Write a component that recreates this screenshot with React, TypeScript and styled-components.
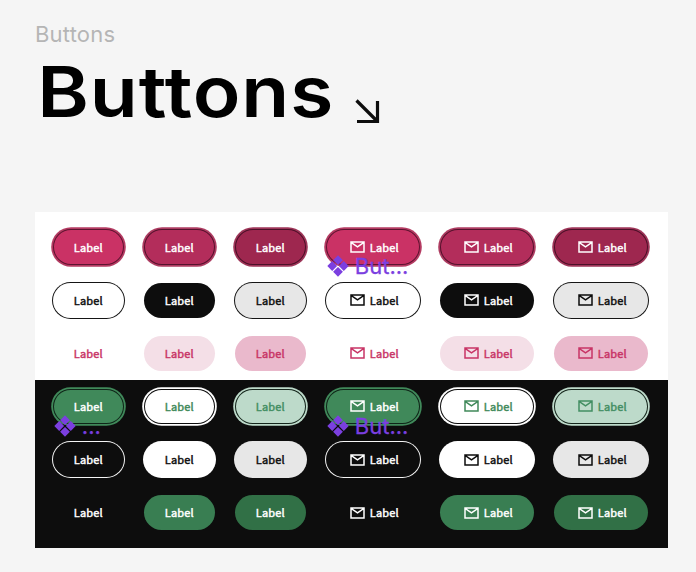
import React from "react";
import styled, { createGlobalStyle, css } from "styled-components";

const GlobalStyle = createGlobalStyle`
  * { box-sizing: border-box; }
  body { margin: 0; background: #f5f5f5; }
`;

const Page = styled.main`
  width: 696px;
  height: 572px;
  padding: 20px 28px 0 35px;
  overflow: hidden;
  background: #f5f5f5;
`;

const FrameName = styled.div`
  height: 28px;
  font: 400 22px/28px Inter, sans-serif;
  letter-spacing: 0.2px;
  color: #b5b5b5;
`;

const Header = styled.header`
  display: flex;
  height: 164px;
`;

const Title = styled.h1`
  width: 320px;
  margin: 0;
  padding: 2px 0 0 2px;
  font: 600 70px/84px Inter, sans-serif;
  letter-spacing: 0.8px;
  color: #000;
  white-space: nowrap;
  transform: scaleX(1.12);
  transform-origin: 0 0;
`;

const Arrow = styled.svg`
  width: 26px;
  height: 26px;
  margin-top: 51px;
`;

const Panel = styled.section<{ $dark?: boolean }>`
  display: grid;
  grid-template-columns: repeat(3, 71px) repeat(3, 94px);
  grid-auto-rows: 35.4px;
  gap: 17.8px 20px;
  width: 633px;
  height: 168px;
  padding: ${(p) => (p.$dark ? "8.7px" : "17.4px")} 0 0 17.8px;
  background: ${(p) => (p.$dark ? "#0d0d0d" : "#fff")};
`;

type Look = { bg: string; fg: string; line?: string; ring?: string; inner?: string };

const Button = styled.button<{ $look: Look; $icon: boolean }>`
  position: relative;
  display: flex;
  align-items: center;
  justify-content: center;
  gap: 5px;
  width: 100%;
  height: 100%;
  padding: 0 0 0 ${(p) => (p.$icon ? "3px" : "0")};
  border: 0;
  border-radius: 18px;
  color: ${(p) => p.$look.fg};
  background: ${(p) => p.$look.bg};
  ${(p) => p.$look.line && css`box-shadow: 0 0 0 1px ${p.$look.line};`}
  ${(p) =>
    p.$look.ring &&
    css`box-shadow: inset 0 0 0 1px ${p.$look.inner}, 0 0 0 1.8px ${p.$look.ring};`}
`;

const Text = styled.span`
  margin-bottom: 1px;
  font: 400 11px/18px "Noto Sans CJK SC", sans-serif;
  letter-spacing: 0.15px;
  -webkit-text-stroke: 0.45px currentColor;
`;

const MailIcon = styled.svg`
  width: 15px;
  height: 12px;
  flex: none;
`;

const Tag = styled.span`
  position: absolute;
  z-index: 1;
  left: 1px;
  top: 23px;
  display: flex;
  align-items: center;
  gap: 6px;
  font: 400 22px/28px Inter, sans-serif;
  color: #7b3fe0;
  white-space: nowrap;
  -webkit-text-stroke: 0.3px currentColor;
`;

const TagMark = styled.svg`
  width: 22px;
  height: 22px;
`;

const Mail = () => (
  <MailIcon viewBox="0 0 15 12" fill="none" stroke="currentColor" strokeWidth="1.5">
    <path d="M1 .9h13v10.2H1zM1 1.4l6.5 4.4 6.5-4.4" />
  </MailIcon>
);

const ComponentTag = ({ children }: { children: string }) => (
  <Tag>
    <TagMark viewBox="0 0 22 22" fill="currentColor">
      <path d="M11 .3l4.9 4.9L11 10.1 6.1 5.2zM5.2 6.1l4.9 4.9-4.9 4.9L.3 11zM16.8 6.1l4.9 4.9-4.9 4.9-4.9-4.9zM11 11.9l4.9 4.9-4.9 4.9-4.9-4.9z" />
    </TagMark>
    {children}
  </Tag>
);

const light: Look[][] = [
  [
    { bg: "#ca3265", fg: "#fff", ring: "#b43b62", inner: "#5d1430" },
    { bg: "#b32d5b", fg: "#fff", ring: "#ad3c61", inner: "#55122d" },
    { bg: "#9e274f", fg: "#fff", ring: "#9d3558", inner: "#4b1028" },
  ],
  [
    { bg: "#fff", fg: "#0d0d0d", line: "#151515" },
    { bg: "#0d0d0d", fg: "#fff" },
    { bg: "#e7e7e7", fg: "#0d0d0d", line: "#151515" },
  ],
  [
    { bg: "transparent", fg: "#c83466" },
    { bg: "#f4dfe7", fg: "#c83466" },
    { bg: "#eab9cc", fg: "#c83466" },
  ],
];

const dark: Look[][] = [
  [
    { bg: "#40895a", fg: "#fff", ring: "#40895a", inner: "#0f2518" },
    { bg: "#fff", fg: "#40895a", ring: "#fff", inner: "#0d0d0d" },
    { bg: "#bddaca", fg: "#438e63", ring: "#bddaca", inner: "#14251b" },
  ],
  [
    { bg: "#0d0d0d", fg: "#fff", line: "#f5f5f5" },
    { bg: "#fff", fg: "#0d0d0d", line: "#fff" },
    { bg: "#e7e7e7", fg: "#0d0d0d", line: "#e7e7e7" },
  ],
  [
    { bg: "transparent", fg: "#fff" },
    { bg: "#397e52", fg: "#fff" },
    { bg: "#317046", fg: "#fff" },
  ],
];

const Samples = ({ looks, tags }: { looks: Look[][]; tags: Record<number, string> }) => (
  <>
    {looks.map((row, r) =>
      [...row, ...row].map((look, c) => (
        <Button key={`${r}-${c}`} $look={look} $icon={c > 2}>
          {c > 2 && <Mail />}
          <Text>Label</Text>
          {r === 0 && tags[c] && <ComponentTag>{tags[c]}</ComponentTag>}
        </Button>
      ))
    )}
  </>
);

export default function App() {
  return (
    <>
      <GlobalStyle />
      <Page>
        <FrameName>Buttons</FrameName>
        <Header>
          <Title>Buttons</Title>
          <Arrow viewBox="0 0 26 26" fill="none" stroke="#0d0d0d" strokeWidth="3.2">
            <path d="M1.5 1.5L22 22M22.5 2v20.5H2" />
          </Arrow>
        </Header>
        <Panel>
          <Samples looks={light} tags={{ 3: "But..." }} />
        </Panel>
        <Panel $dark>
          <Samples looks={dark} tags={{ 0: "...", 3: "But..." }} />
        </Panel>
      </Page>
    </>
  );
}
